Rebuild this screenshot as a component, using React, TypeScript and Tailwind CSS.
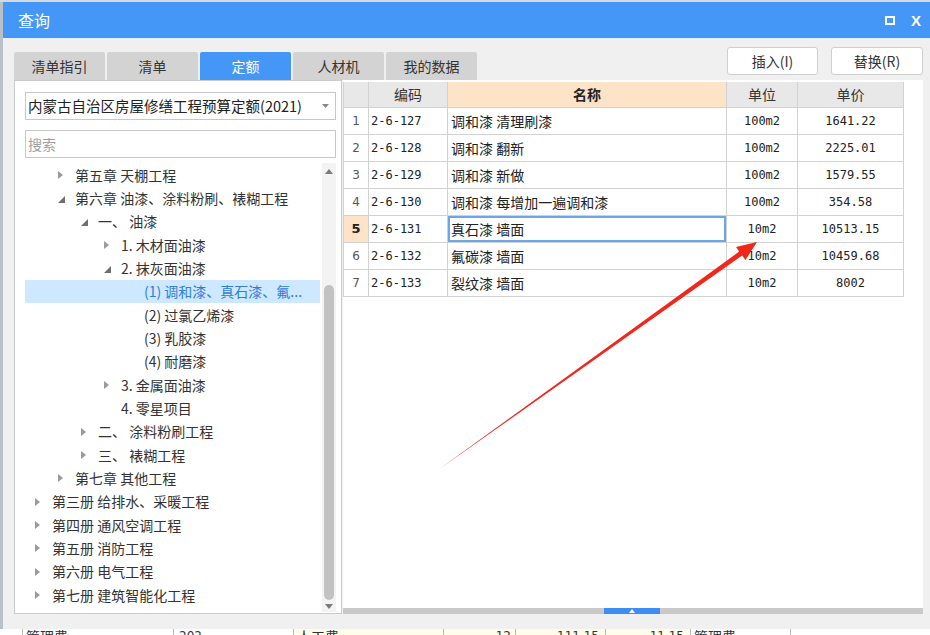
import React from 'react';

type TNode = { level: number; state: 'open' | 'closed' | 'leaf'; text: string; sel?: boolean };

const tree: TNode[] = [
  { level: 2, state: 'closed', text: '第五章 天棚工程' },
  { level: 2, state: 'open', text: '第六章 油漆、涂料粉刷、裱糊工程' },
  { level: 3, state: 'open', text: '一、 油漆' },
  { level: 4, state: 'closed', text: '1. 木材面油漆' },
  { level: 4, state: 'open', text: '2. 抹灰面油漆' },
  { level: 5, state: 'leaf', text: '(1) 调和漆、真石漆、氟...', sel: true },
  { level: 5, state: 'leaf', text: '(2) 过氯乙烯漆' },
  { level: 5, state: 'leaf', text: '(3) 乳胶漆' },
  { level: 5, state: 'leaf', text: '(4) 耐磨漆' },
  { level: 4, state: 'closed', text: '3. 金属面油漆' },
  { level: 4, state: 'leaf', text: '4. 零星项目' },
  { level: 3, state: 'closed', text: '二、 涂料粉刷工程' },
  { level: 3, state: 'closed', text: '三、 裱糊工程' },
  { level: 2, state: 'closed', text: '第七章 其他工程' },
  { level: 1, state: 'closed', text: '第三册 给排水、采暖工程' },
  { level: 1, state: 'closed', text: '第四册 通风空调工程' },
  { level: 1, state: 'closed', text: '第五册 消防工程' },
  { level: 1, state: 'closed', text: '第六册 电气工程' },
  { level: 1, state: 'closed', text: '第七册 建筑智能化工程' },
];

const padCls: Record<number, string> = {
  1: 'pl-[10px]',
  2: 'pl-[33px]',
  3: 'pl-[56px]',
  4: 'pl-[79px]',
  5: 'pl-[102px]',
};

const rows = [
  ['1', '2-6-127', '调和漆 清理刷漆', '100m2', '1641.22'],
  ['2', '2-6-128', '调和漆 翻新', '100m2', '2225.01'],
  ['3', '2-6-129', '调和漆 新做', '100m2', '1579.55'],
  ['4', '2-6-130', '调和漆 每增加一遍调和漆', '100m2', '354.58'],
  ['5', '2-6-131', '真石漆 墙面', '10m2', '10513.15'],
  ['6', '2-6-132', '氟碳漆 墙面', '10m2', '10459.68'],
  ['7', '2-6-133', '裂纹漆 墙面', '10m2', '8002'],
];

const tabs = ['清单指引', '清单', '定额', '人材机', '我的数据'];

function Arrow({ state }: { state: TNode['state'] }) {
  if (state === 'closed')
    return (
      <svg width="5" height="8" viewBox="0 0 5 8" className="mt-[1px]">
        <path d="M0 0 L5 4 L0 8 Z" fill="#9a9a9a" />
      </svg>
    );
  if (state === 'open')
    return (
      <svg width="7" height="7" viewBox="0 0 7 7" className="mt-[3px]">
        <path d="M7 0 L7 7 L0 7 Z" fill="#6e6e6e" />
      </svg>
    );
  return null;
}

export default function App() {
  return (
    <div className="relative w-[930px] h-[635px] overflow-hidden bg-[#cdd3da] font-['Noto_Sans_CJK_SC',sans-serif] text-[#333]">
      <div className="h-[2px] bg-[#d5dae0]" />
      <div className="flex">
        <div className="w-[3px] h-[627px] bg-[#b9c0c8]" />
        <div className="w-[927px] h-[627px] flex flex-col">
          {/* title bar */}
          <div className="h-[36px] bg-[#4597f7] flex items-center pl-[15px] pr-[9px] text-white">
            <span className="text-[16px] leading-[16px]">查询</span>
            <div className="ml-auto flex items-center gap-[16px]">
              <div className="w-[10px] h-[9px] border-2 border-white" />
              <span className="font-['Liberation_Sans',sans-serif] font-bold text-[15px] leading-[15px]">X</span>
            </div>
          </div>
          {/* body */}
          <div className="flex-1 bg-[#f0f0f0] flex flex-col border-t border-[#e6eefa]">
            {/* tabs and buttons */}
            <div className="h-[41px] flex pl-[11px] pr-[7px]">
              <div className="flex gap-[2px] items-end">
                {tabs.map((t, i) => (
                  <div
                    key={t}
                    className={
                      i === 2
                        ? 'w-[91px] h-[28px] rounded-t-[2px] bg-[#4597f7] text-white text-[14px] flex items-center justify-center'
                        : 'w-[91px] h-[28px] rounded-t-[2px] bg-[#d3d3d3] text-[#333] text-[14px] flex items-center justify-center'
                    }
                  >
                    {t}
                  </div>
                ))}
              </div>
              <div className="ml-auto mt-[8px] flex gap-[13px] self-start">
                <div className="w-[91px] h-[28px] bg-white border border-[#cfcfcf] rounded-[3px] flex items-center justify-center text-[14px] text-[#333]">插入(I)</div>
                <div className="w-[92px] h-[28px] bg-white border border-[#cfcfcf] rounded-[3px] flex items-center justify-center text-[14px] text-[#333]">替换(R)</div>
              </div>
            </div>
            {/* main */}
            <div className="h-[534px] flex">
              {/* left panel */}
              <div className="ml-[11px] w-[328px] h-full bg-white border border-[#cbcbcb] flex flex-col pl-[10px] pr-[5px] pt-[11px]">
                <div className="h-[28px] border border-[#c8c8c8] flex items-center pl-[2px] pr-[6px]">
                  <span className="text-[14.5px] leading-[18px] text-[#222] whitespace-nowrap">内蒙古自治区房屋修缮工程预算定额(2021)</span>
                  <svg width="7" height="4" viewBox="0 0 7 4" className="ml-auto">
                    <path d="M0 0 L7 0 L3.5 4 Z" fill="#888" />
                  </svg>
                </div>
                <div className="mt-[10px] h-[28px] border border-[#c8c8c8] flex items-center pl-[2px]">
                  <span className="text-[14px] leading-[18px] text-[#a0a0a0]">搜索</span>
                </div>
                <div className="mt-[5px] flex-1 min-h-0 flex gap-[2px] pb-[1px]">
                  <div className="w-[295px] flex flex-col">
                    {tree.map((n, i) => (
                      <div
                        key={i}
                        className={
                          'h-[23.33px] flex items-center shrink-0 ' +
                          padCls[n.level] +
                          (n.sel ? ' bg-[#cde8ff] text-[#2f7ed8]' : ' text-[#333]')
                        }
                      >
                        <div className="w-[17px] shrink-0 flex items-center">
                          <Arrow state={n.state} />
                        </div>
                        <span className="text-[14px] leading-[18px] whitespace-pre">{n.text}</span>
                      </div>
                    ))}
                  </div>
                  <div className="w-[14px] bg-[#f3f3f3] flex flex-col items-center">
                    <div className="h-[16px] flex items-center justify-center">
                      <svg width="8" height="5" viewBox="0 0 8 5">
                        <path d="M0 5 L4 0 L8 5 Z" fill="#7a7a7a" />
                      </svg>
                    </div>
                    <div className="mt-[106px] w-[10px] h-[315px] rounded-full bg-[#c2c2c2]" />
                    <div className="flex-1 flex items-center justify-center">
                      <svg width="8" height="5" viewBox="0 0 8 5">
                        <path d="M0 0 L8 0 L4 5 Z" fill="#7a7a7a" />
                      </svg>
                    </div>
                  </div>
                </div>
              </div>
              {/* right panel */}
              <div className="ml-[1px] w-[580px] h-full bg-white flex flex-col pt-[2px]">
                <div className="w-[561px] border-l border-[#d2d2d2]">
                  <div className="grid grid-cols-[25px_79px_279px_71px_106px] h-[26px] text-[14px]">
                    <div className="bg-[#e8e8e8] border-r border-b border-[#d2d2d2]" />
                    <div className="bg-[#e8e8e8] border-r border-b border-[#d2d2d2] flex items-center justify-center">编码</div>
                    <div className="bg-[#fde3c7] border-r border-b border-[#d2d2d2] flex items-center justify-center font-bold text-[#222]">名称</div>
                    <div className="bg-[#e8e8e8] border-r border-b border-[#d2d2d2] flex items-center justify-center">单位</div>
                    <div className="bg-[#e8e8e8] border-r border-b border-[#d2d2d2] flex items-center justify-center">单价</div>
                  </div>
                  {rows.map((r) => {
                    const sel = r[0] === '5';
                    return (
                      <div key={r[0]} className="grid grid-cols-[25px_79px_279px_71px_106px] h-[27px]">
                        <div
                          className={
                            sel
                              ? 'bg-[#fde3c7] border-r border-b border-[#d2d2d2] flex items-center justify-center text-[13px] font-bold text-[#222] font-["DejaVu_Sans",sans-serif]'
                              : 'border-r border-b border-[#d2d2d2] flex items-center justify-center text-[12px] text-[#555] font-["DejaVu_Sans",sans-serif]'
                          }
                        >
                          {r[0]}
                        </div>
                        <div className="border-r border-b border-[#d2d2d2] flex items-center pl-[2px] text-[12px] text-[#222] font-['DejaVu_Sans_Mono',monospace]">{r[1]}</div>
                        <div
                          className={
                            sel
                              ? 'border-r border-b border-[#d2d2d2] flex items-center pl-[3px] text-[14px] text-[#222] shadow-[inset_0_0_0_2px_#6aa6e8]'
                              : 'border-r border-b border-[#d2d2d2] flex items-center pl-[3px] text-[14px] text-[#222]'
                          }
                        >
                          {r[2]}
                        </div>
                        <div className="border-r border-b border-[#d2d2d2] flex items-center justify-center text-[12px] text-[#222] font-['DejaVu_Sans_Mono',monospace]">{r[3]}</div>
                        <div className="border-r border-b border-[#d2d2d2] flex items-center justify-center text-[12px] text-[#222] font-['DejaVu_Sans_Mono',monospace]">{r[4]}</div>
                      </div>
                    );
                  })}
                </div>
                <div className="flex-1" />
                <div className="h-[6px] bg-[#c9c9c9] flex">
                  <div className="ml-[261px] w-[56px] h-full bg-[#3d8ef2] flex items-center justify-center">
                    <svg width="6" height="4" viewBox="0 0 6 4">
                      <path d="M0 4 L3 0 L6 4 Z" fill="#ffffff" />
                    </svg>
                  </div>
                </div>
              </div>
            </div>
            <div className="flex-1" />
          </div>
        </div>
      </div>
      {/* bottom strip of background app */}
      <div className="h-[6px] bg-white flex overflow-hidden text-[14px] leading-[14px] text-[#333]">
        <div className="w-[22px]" />
        <div className="w-[151px] border-l border-[#bbb] pl-[3px]">管理费</div>
        <div className="w-[120px] border-l border-[#bbb] pl-[5px] font-['DejaVu_Sans',sans-serif] text-[12px]">202</div>
        <div className="w-[150px] border-l border-[#bbb] pl-[3px] bg-[#fffdea]">人工费</div>
        <div className="w-[72px] border-l border-[#bbb] pr-[4px] text-right font-['DejaVu_Sans',sans-serif] text-[12px] bg-[#fffdea]">12</div>
        <div className="w-[90px] border-l border-[#bbb] pr-[6px] text-right font-['DejaVu_Sans',sans-serif] text-[12px] bg-[#fffdea]">111.15</div>
        <div className="w-[85px] border-l border-[#bbb] pr-[6px] text-right font-['DejaVu_Sans',sans-serif] text-[12px] bg-[#fffdea]">11.15</div>
        <div className="w-[100px] border-l border-[#bbb] pl-[3px]">管理费</div>
        <div className="flex-1 border-l border-[#bbb]" />
      </div>
      {/* red annotation arrow */}
      <svg className="absolute left-0 top-0 pointer-events-none" width="930" height="635" viewBox="0 0 930 635">
        <polygon points="438,470 742.2,255.6 745.4,260.1 757,242 736,247.1 739.2,251.6" fill="#f0281c" />
      </svg>
    </div>
  );
}
